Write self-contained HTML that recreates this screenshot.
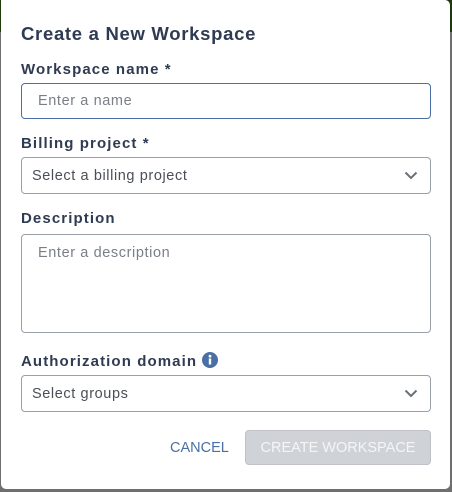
<!DOCTYPE html>
<html><head><style>
html,body{margin:0;padding:0;width:452px;height:492px;overflow:hidden;background:#6f6f6f;font-family:"Liberation Sans",sans-serif;}
.top{position:absolute;left:0;top:0;width:452px;height:32px;background:#1e3a0c;}
.modal{position:absolute;left:1px;top:0;width:449px;height:489px;background:#fff;border-radius:0 5px 5px 5px;}
.t{position:absolute;left:21px;color:#2f3b52;font-weight:bold;white-space:nowrap;}
.l{font-size:15px;letter-spacing:1.1px;}
.box{position:absolute;left:21px;width:408px;border:1px solid #9aa0a8;border-radius:4px;background:#fff;}
.ph{position:absolute;color:#7a7f87;font-size:14.5px;letter-spacing:0.6px;white-space:nowrap;}
.chev{position:absolute;right:12px;}
</style></head><body>
<div class="top"></div>
<div class="modal"></div>
<div class="t" style="top:23px;font-size:18.5px;letter-spacing:0.7px;">Create a New Workspace</div>
<div class="t l" style="top:61px;">Workspace name *</div>
<div class="box" style="top:83px;height:34px;border-color:#4a6fa5;"><span class="ph" style="left:16px;top:9px;">Enter a name</span></div>
<div class="t l" style="top:135px;">Billing project *</div>
<div class="box" style="top:157px;height:35px;"><span class="ph" style="left:10px;top:10px;color:#4a4f57;">Select a billing project</span>
<svg class="chev" style="top:13px" width="14" height="9" viewBox="0 0 14 9"><path d="M1.5 1.5L7 7L12.5 1.5" stroke="#6b7078" stroke-width="2" fill="none"/></svg></div>
<div class="t l" style="top:210px;">Description</div>
<div class="box" style="top:234px;height:97px;"><span class="ph" style="left:16px;top:10px;">Enter a description</span></div>
<div class="t l" style="top:352px;">Authorization domain <svg width="16" height="16" viewBox="0 0 16 16" style="vertical-align:-2px"><circle cx="8" cy="8" r="8" fill="#4a6fa5"/><rect x="6.8" y="6.5" width="2.4" height="6" fill="#fff"/><circle cx="8" cy="4.2" r="1.4" fill="#fff"/></svg></div>
<div class="box" style="top:375px;height:35px;"><span class="ph" style="left:10px;top:10px;color:#4a4f57;">Select groups</span>
<svg class="chev" style="top:13px" width="14" height="9" viewBox="0 0 14 9"><path d="M1.5 1.5L7 7L12.5 1.5" stroke="#6b7078" stroke-width="2" fill="none"/></svg></div>
<div style="position:absolute;left:170px;top:440px;color:#4a6fa5;font-size:14.5px;">CANCEL</div>
<div style="position:absolute;left:245px;top:430px;width:184px;height:33px;background:#cfd2d7;border:1px solid #bfc2c7;border-radius:4px;color:#f4f5f7;font-size:14.5px;text-align:center;line-height:34px;">CREATE WORKSPACE</div>
</body></html>
